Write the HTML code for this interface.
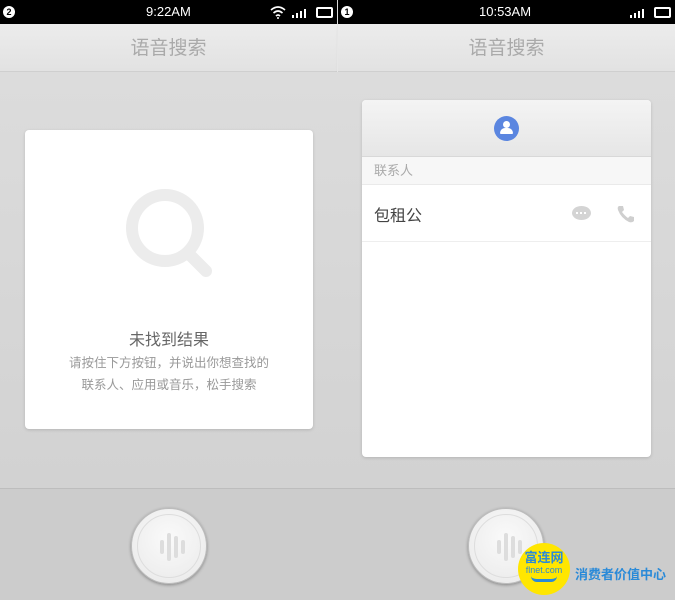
<!DOCTYPE html>
<html><head><meta charset="utf-8"><style>
*{margin:0;padding:0;box-sizing:border-box}
body{width:675px;height:600px;overflow:hidden;position:relative;font-family:"Liberation Sans","Noto Sans CJK SC",sans-serif;background:#d8d8d8}
.abs{position:absolute}
.status{top:0;height:24px;background:#000;color:#fff;font-size:13px;line-height:24px}
.title{top:24px;height:48px;background:linear-gradient(#ececec,#e2e2e2);color:#aaa;font-size:19px;line-height:50px;text-align:center;border-bottom:1px solid #cfcfcf;box-shadow:0 2px 3px rgba(0,0,0,.08)}
.content{top:72px;height:416px;background:linear-gradient(#dcdcdc,#d2d2d2)}
.bottom{top:488px;height:112px;background:#cccccc;border-top:1px solid #bdbdbd}
.card{background:#fff;border-radius:4px;box-shadow:0 1px 3px rgba(0,0,0,.15)}
.btn{width:76px;height:76px;border-radius:50%;background:radial-gradient(circle at 50% 40%,#fafafa,#e8e8e8);box-shadow:0 1px 3px rgba(0,0,0,.35);border:1px solid #bbb}
.btn::after{content:"";position:absolute;left:5px;top:5px;right:5px;bottom:5px;border-radius:50%;border:1px solid #ddd}
.bar{position:absolute;background:#ddd;border-radius:2px;width:4px}
</style></head><body>
<div class="abs status" style="left:0;width:337px">
 <div class="abs" style="left:3px;top:6px;width:12px;height:12px;border-radius:50%;background:#fff;color:#000;font-size:9px;line-height:12px;text-align:center;font-weight:bold">2</div>
 <div class="abs" style="left:146px">9:22AM</div>
 <svg class="abs" style="left:270px;top:5px" width="16" height="14"><path d="M1 5 Q8 -1 15 5" fill="none" stroke="#fff" stroke-width="1.6"/><path d="M3.5 8 Q8 4 12.5 8" fill="none" stroke="#fff" stroke-width="1.6"/><path d="M6 11 Q8 9 10 11" fill="none" stroke="#fff" stroke-width="1.6"/><circle cx="8" cy="13" r="1" fill="#fff"/></svg>
 <div class="abs" style="left:292px;top:9px;width:18px;height:9px"><span class="abs" style="left:0;bottom:0;width:2px;height:3px;background:#fff"></span><span class="abs" style="left:4px;bottom:0;width:2px;height:5px;background:#fff"></span><span class="abs" style="left:8px;bottom:0;width:2px;height:7px;background:#fff"></span><span class="abs" style="left:12px;bottom:0;width:2px;height:9px;background:#fff"></span></div>
 <div class="abs" style="left:316px;top:7px;width:17px;height:11px;border:2px solid #fff;border-radius:2px"></div>
</div>
<div class="abs status" style="left:338px;width:337px">
 <div class="abs" style="left:3px;top:6px;width:12px;height:12px;border-radius:50%;background:#fff;color:#000;font-size:9px;line-height:12px;text-align:center;font-weight:bold">1</div>
 <div class="abs" style="left:141px">10:53AM</div>
 <div class="abs" style="left:292px;top:9px;width:18px;height:9px"><span class="abs" style="left:0;bottom:0;width:2px;height:3px;background:#fff"></span><span class="abs" style="left:4px;bottom:0;width:2px;height:5px;background:#fff"></span><span class="abs" style="left:8px;bottom:0;width:2px;height:7px;background:#fff"></span><span class="abs" style="left:12px;bottom:0;width:2px;height:9px;background:#fff"></span></div>
 <div class="abs" style="left:316px;top:7px;width:17px;height:11px;border:2px solid #fff;border-radius:2px"></div>
</div>

<div class="abs title" style="left:0;width:337px">语音搜索</div>
<div class="abs title" style="left:338px;width:337px">语音搜索</div>
<div class="abs" style="left:337px;top:24px;width:1px;height:48px;background:#e6e6e6"></div>
<div class="abs content" style="left:0;width:675px"></div>
<div class="abs bottom" style="left:0;width:675px"></div>

<div class="abs card" style="left:25px;top:130px;width:288px;height:299px">
 <svg class="abs" style="left:95px;top:55px" width="100" height="100"><circle cx="45" cy="43" r="33" fill="none" stroke="#ececec" stroke-width="12"/><line x1="70" y1="70" x2="86" y2="86" stroke="#ececec" stroke-width="12" stroke-linecap="round"/></svg>
 <div class="abs" style="left:0;width:288px;top:196px;text-align:center;font-size:16px;color:#666">未找到结果</div>
 <div class="abs" style="left:0;width:288px;top:222px;text-align:center;font-size:12.5px;color:#999;line-height:22px">请按住下方按钮，并说出你想查找的<br>联系人、应用或音乐，松手搜索</div>
</div>

<div class="abs card" style="left:362px;top:100px;width:289px;height:357px;overflow:hidden">
 <div class="abs" style="left:0;top:0;width:289px;height:57px;background:linear-gradient(#f4f4f4,#e6e6e6);border-bottom:1px solid #d8d8d8"></div>
 <div class="abs" style="left:132px;top:16px;width:25px;height:25px;border-radius:50%;background:#5b86e0"><div class="abs" style="left:9px;top:5px;width:7px;height:7px;border-radius:50%;background:#fff"></div><div class="abs" style="left:6px;top:12px;width:13px;height:6px;border-radius:5px 5px 1px 1px;background:#fff"></div></div>
 <div class="abs" style="left:0;top:57px;width:289px;height:28px;background:#f7f7f7;border-bottom:1px solid #eaeaea;font-size:13px;color:#aaa;line-height:28px;padding-left:12px">联系人</div>
 <div class="abs" style="left:12px;top:102px;font-size:16px;color:#444">包租公</div>
 <div class="abs" style="left:210px;top:106px;width:19px;height:14px;border-radius:50%;background:#d4d4d4"><span class="abs" style="left:4px;top:6px;width:2px;height:2px;background:#fff"></span><span class="abs" style="left:8px;top:6px;width:2px;height:2px;background:#fff"></span><span class="abs" style="left:12px;top:6px;width:2px;height:2px;background:#fff"></span></div>
 <svg class="abs" style="left:254px;top:104px" width="20" height="20"><path d="M3 2 L7 2 L8 6 L6 8 Q9 12 12 14 L14 12 L18 13 L18 17 Q16 19 13 18 Q5 14 2 6 Q1 3 3 2Z" fill="#cfcfcf"/></svg>
 <div class="abs" style="left:0;top:141px;width:289px;height:1px;background:#eee"></div>
</div>

<div class="abs btn" style="left:131px;top:508px"><div class="bar" style="left:28px;top:31px;height:14px"></div><div class="bar" style="left:35px;top:24px;height:28px"></div><div class="bar" style="left:42px;top:27px;height:22px"></div><div class="bar" style="left:49px;top:31px;height:14px"></div></div>
<div class="abs btn" style="left:468px;top:508px"><div class="bar" style="left:28px;top:31px;height:14px"></div><div class="bar" style="left:35px;top:24px;height:28px"></div><div class="bar" style="left:42px;top:27px;height:22px"></div><div class="bar" style="left:49px;top:31px;height:14px"></div></div>

<div class="abs" style="left:518px;top:543px;width:52px;height:52px;border-radius:50%;background:#ffe600;text-align:center;color:#2a8ad8">
 <div style="font-size:13px;font-weight:bold;margin-top:8px;line-height:14px">富连网</div>
 <div style="font-size:9px;line-height:10px">flnet.com</div>
 <div style="width:26px;height:6px;margin:1px auto 0;border-bottom:3px solid #2a8ad8;border-radius:0 0 14px 14px"></div>
</div>
<div class="abs" style="left:575px;top:564px;font-size:13px;font-weight:bold;color:#2a8ad8">消费者价值中心</div>
</body></html>
